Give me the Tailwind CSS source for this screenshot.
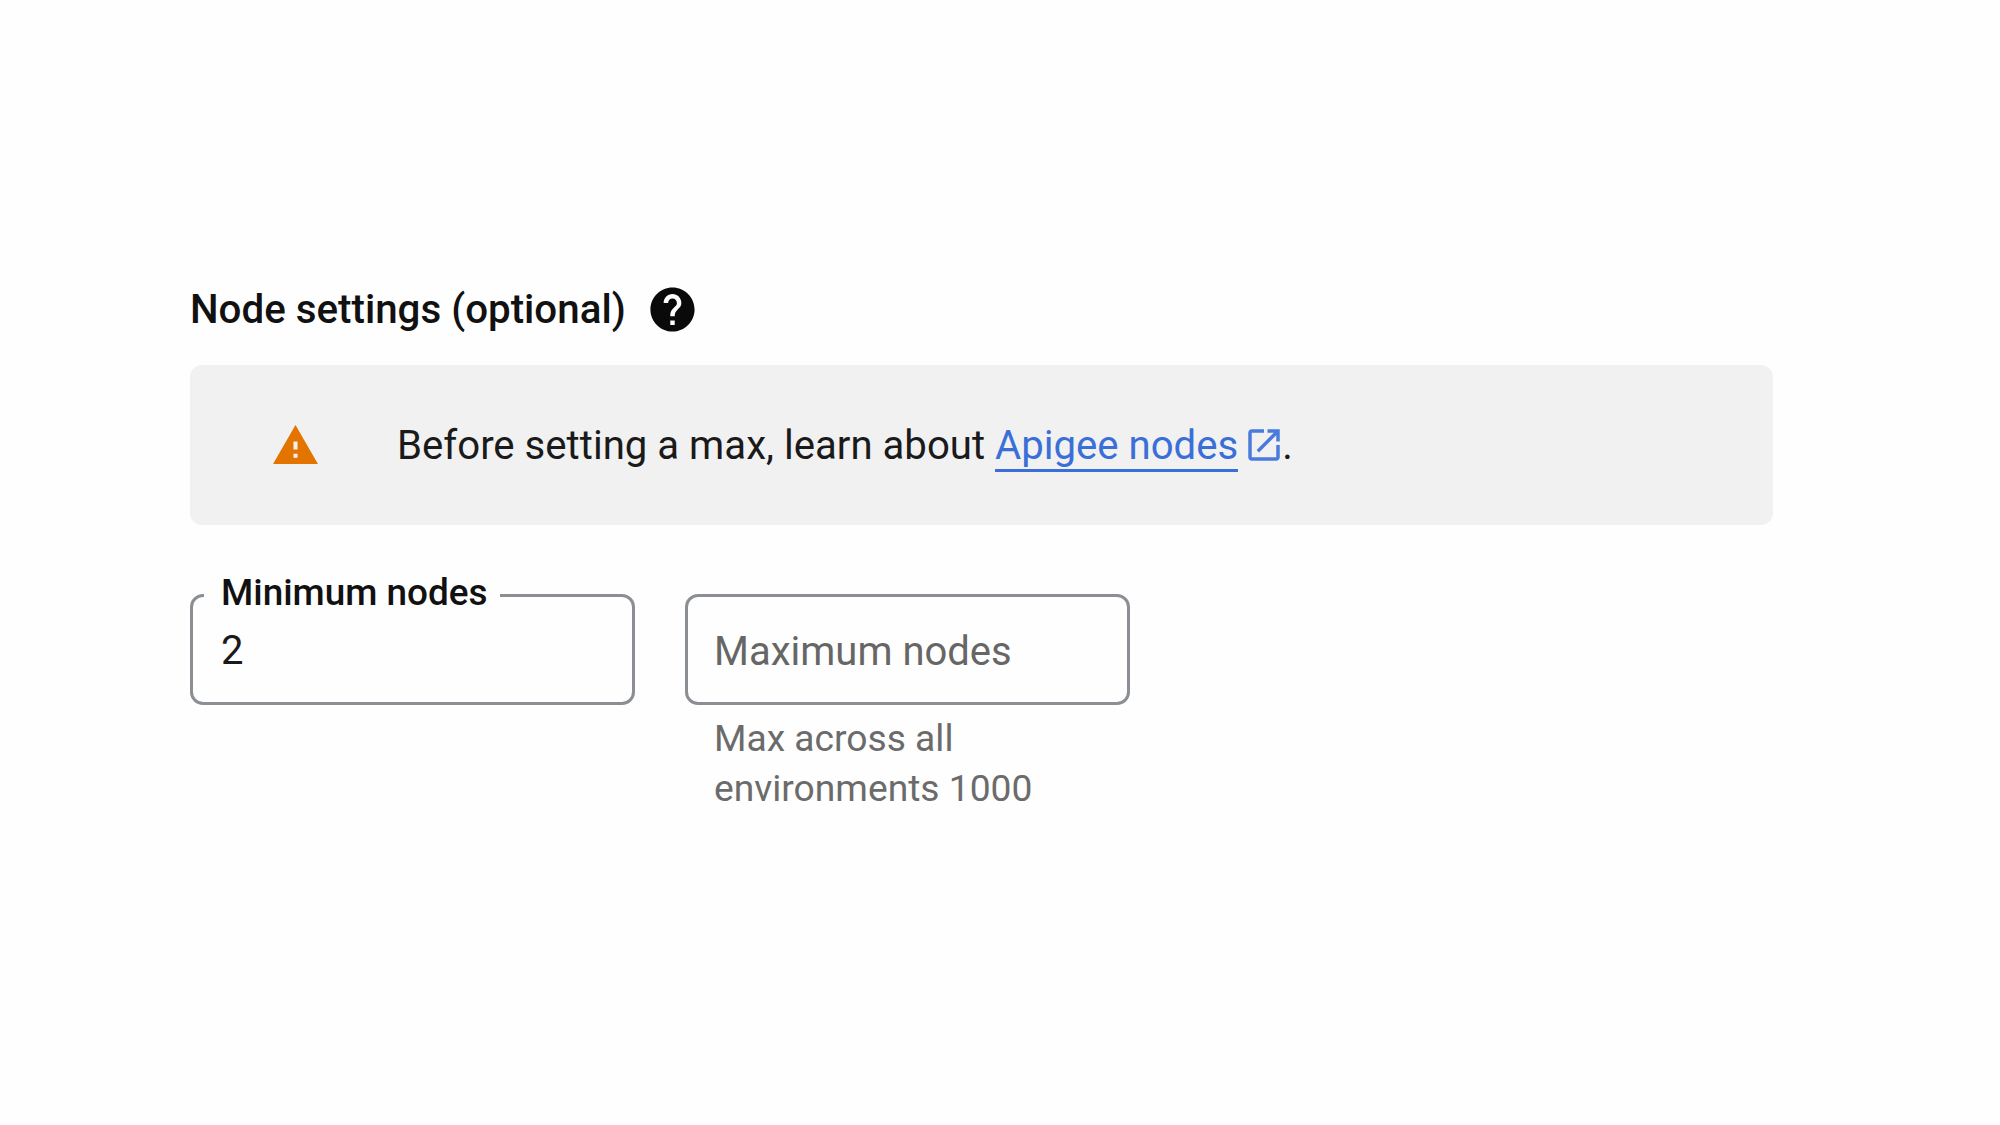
<!DOCTYPE html>
<html lang="en">
<head>
  <meta charset="UTF-8" />
  <title>Node settings</title>
  <script src="https://cdn.jsdelivr.net/npm/@tailwindcss/browser@4"></script>
</head>
<body class="bg-[#fefefe] font-['Roboto',sans-serif] w-[2000px] h-[1125px] overflow-hidden">
  <main class="pl-[190px] pt-[281px] w-[1773px]">
    <!-- heading -->
    <div class="flex items-center h-[58px]">
      <h2 class="text-[40.3px] leading-[58px] font-medium text-[#111]">Node settings (optional)</h2>
      <svg class="w-[53px] h-[53px] ml-[20px] -mt-[2px]" viewBox="0 0 24 24" fill="#0a0a0a"><path d="M12 2C6.48 2 2 6.48 2 12s4.48 10 10 10 10-4.48 10-10S17.52 2 12 2zm1 17h-2v-2h2v2zm2.07-7.75l-.9.92C13.45 12.9 13 13.5 13 15h-2v-.5c0-1.1.45-2.1 1.17-2.83l1.24-1.26c.37-.36.59-.86.59-1.41 0-1.1-.9-2-2-2s-2 .9-2 2H8c0-2.21 1.79-4 4-4s4 1.79 4 4c0 .88-.36 1.68-.93 2.25z"/></svg>
    </div>

    <!-- warning -->
    <div class="mt-[26px] h-[160px] bg-[#f1f1f1] rounded-[12px] flex items-center pl-[81px]">
      <svg class="w-[49px] h-[49px] shrink-0 mt-[1px]" viewBox="0 0 24 24" fill="#e37400"><path d="M1 21h22L12 2 1 21zm12-3h-2v-2h2v2zm0-4h-2v-4h2v4z"/></svg>
      <p class="ml-[77px] mt-[2px] text-[40.15px] leading-[50px] text-[#1a1a1a] whitespace-nowrap">
        Before setting a max, learn about
        <a href="#" class="text-[#3b6fd8] border-b-[3px] border-[#3b6fd8]">Apigee nodes</a><svg class="inline-block align-top w-[42px] h-[42px] ml-[5px] mt-[3px] -mr-[3px]" viewBox="0 0 24 24" fill="#4a7bdc"><path d="M19 19H5V5h7V3H5c-1.11 0-2 .9-2 2v14c0 1.1.89 2 2 2h14c1.1 0 2-.9 2-2v-7h-2v7zM14 3v2h3.59l-9.83 9.83 1.41 1.41L19 6.41V10h2V3h-7z"/></svg>.
      </p>
    </div>

    <!-- fields -->
    <div class="mt-[69px] flex gap-[50px] items-start">
      <div class="relative w-[445px] h-[111px] border-[3px] border-[#8b8f94] rounded-[13px] flex items-center pl-[28px]">
        <label class="absolute -top-[23px] left-[11px] pl-[17px] pr-[12px] bg-[#fefefe] text-[36.9px] leading-[40px] font-medium text-[#111]">
          <span class="relative top-[-1px]">Minimum nodes</span>
        </label>
        <span class="text-[40px] leading-[50px] text-[#1a1a1a] mt-[2px]">2</span>
      </div>
      <div class="w-[445px]">
        <div class="h-[111px] border-[3px] border-[#8b8f94] rounded-[13px] flex items-center pl-[26px] text-[40px] leading-[50px] text-[#666]"><span class="mt-[4px]">Maximum nodes</span></div>
        <p class="mt-[8px] pl-[29px] text-[37.2px] leading-[50px] text-[#6b6b6b]">Max across all<br>environments 1000</p>
      </div>
    </div>
  </main>
</body>
</html>
